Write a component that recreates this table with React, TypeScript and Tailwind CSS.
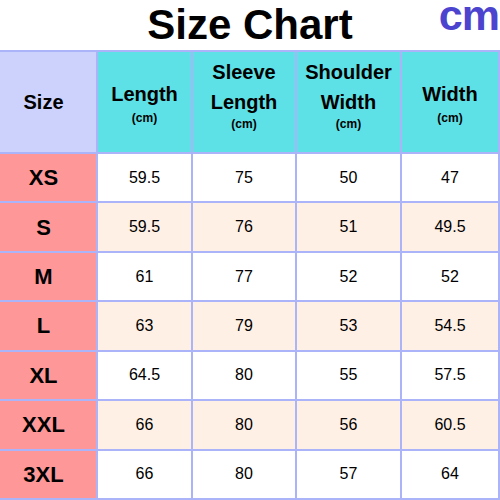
import React from 'react';

interface Row {
  size: string;
  length: string;
  sleeve: string;
  shoulder: string;
  width: string;
}

const rows: Row[] = [
  { size: 'XS', length: '59.5', sleeve: '75', shoulder: '50', width: '47' },
  { size: 'S', length: '59.5', sleeve: '76', shoulder: '51', width: '49.5' },
  { size: 'M', length: '61', sleeve: '77', shoulder: '52', width: '52' },
  { size: 'L', length: '63', sleeve: '79', shoulder: '53', width: '54.5' },
  { size: 'XL', length: '64.5', sleeve: '80', shoulder: '55', width: '57.5' },
  { size: 'XXL', length: '66', sleeve: '80', shoulder: '56', width: '60.5' },
  { size: '3XL', length: '66', sleeve: '80', shoulder: '57', width: '64' },
];

function HeaderCell({ lines, tall }: { lines: string[]; tall?: boolean }) {
  return (
    <div
      className={`flex flex-col items-center justify-center bg-[#5ee1e6] text-center ${
        tall ? 'pb-[17px]' : ''
      }`}
    >
      {lines.map((l) => (
        <span key={l} className="text-[20px] font-bold leading-[30px]">
          {l}
        </span>
      ))}
      <span className={`text-[12px] font-bold leading-[14px] ${tall ? '' : 'mt-[1.5px]'}`}>(cm)</span>
    </div>
  );
}

export default function App() {
  return (
    <div
      className="relative h-[500px] w-[500px] overflow-hidden bg-white text-black"
      style={{ fontFamily: '"Liberation Sans", Arial, sans-serif' }}
    >
      {/* Title */}
      <div className="h-[50px] pt-[4px] text-center text-[42px] font-bold leading-[42px]">Size Chart</div>
      <div className="absolute right-[1px] top-0 text-[43px] font-bold leading-[30px] tracking-[-1px] text-[#4c44cf]">cm</div>

      {/* Table */}
      <div className="grid h-[450px] grid-cols-[96px_93px_102px_103px_96px] grid-rows-[100px_repeat(7,1fr)] gap-[2px] bg-[#abb3f9] pb-[2px] pr-[2px] pt-[2px]">
        <div className="flex items-center justify-center bg-[#cdd2fc] pr-[9px] text-[20px] font-bold">Size</div>
        <HeaderCell lines={['Length']} />
        <HeaderCell lines={['Sleeve', 'Length']} tall />
        <HeaderCell lines={['Shoulder', 'Width']} tall />
        <HeaderCell lines={['Width']} />

        {rows.map((r, i) => {
          const bg = i % 2 === 1 ? 'bg-[#fff0e6]' : 'bg-white';
          return (
            <React.Fragment key={r.size}>
              <div className="flex items-center justify-center bg-[#fe9898] pr-[9px] text-[22px] font-bold">{r.size}</div>
              <div className={`flex items-center justify-center text-[16px] ${bg}`}>{r.length}</div>
              <div className={`flex items-center justify-center text-[16px] ${bg}`}>{r.sleeve}</div>
              <div className={`flex items-center justify-center text-[16px] ${bg}`}>{r.shoulder}</div>
              <div className={`flex items-center justify-center text-[16px] ${bg}`}>{r.width}</div>
            </React.Fragment>
          );
        })}
      </div>
    </div>
  );
}
